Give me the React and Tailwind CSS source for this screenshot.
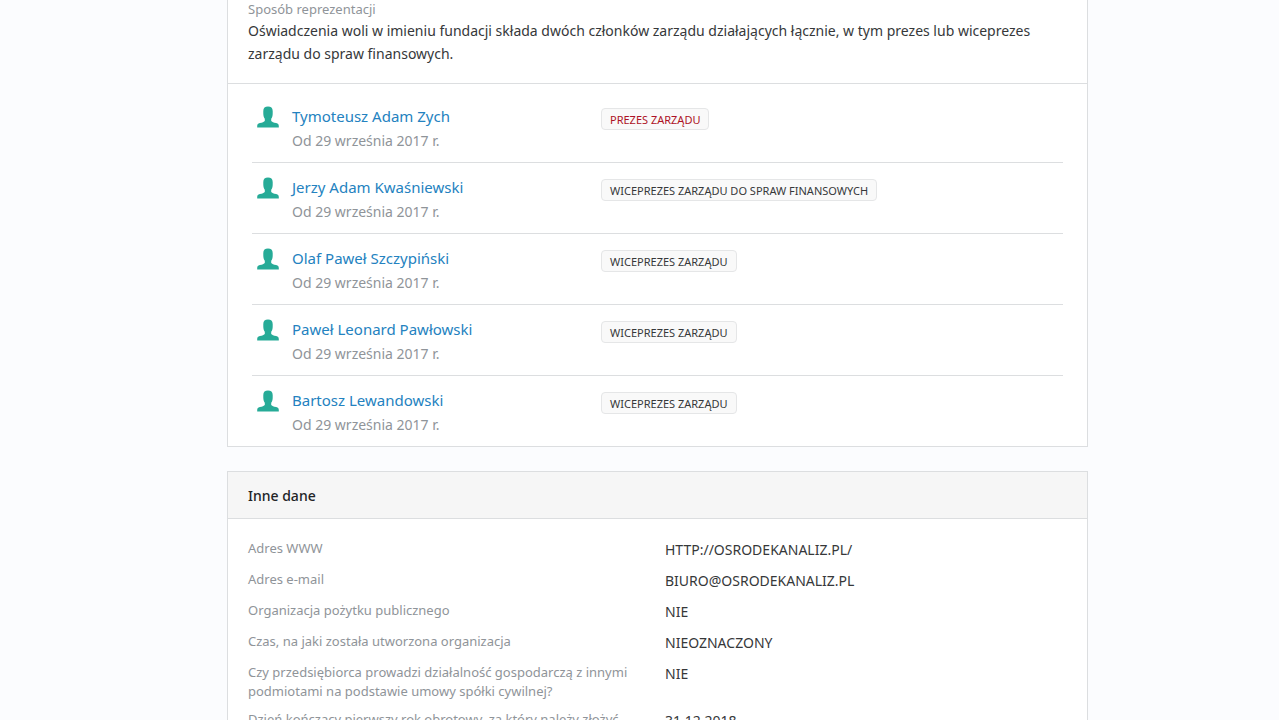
import React from "react";

const people = [
  { name: "Tymoteusz Adam Zych", role: "PREZES ZARZĄDU", main: true },
  { name: "Jerzy Adam Kwaśniewski", role: "WICEPREZES ZARZĄDU DO SPRAW FINANSOWYCH" },
  { name: "Olaf Paweł Szczypiński", role: "WICEPREZES ZARZĄDU" },
  { name: "Paweł Leonard Pawłowski", role: "WICEPREZES ZARZĄDU" },
  { name: "Bartosz Lewandowski", role: "WICEPREZES ZARZĄDU" },
];

const details = [
  { label: "Adres WWW", value: "HTTP://OSRODEKANALIZ.PL/" },
  { label: "Adres e-mail", value: "BIURO@OSRODEKANALIZ.PL" },
  { label: "Organizacja pożytku publicznego", value: "NIE" },
  { label: "Czas, na jaki została utworzona organizacja", value: "NIEOZNACZONY" },
  {
    label:
      "Czy przedsiębiorca prowadzi działalność gospodarczą z innymi podmiotami na podstawie umowy spółki cywilnej?",
    value: "NIE",
  },
  { label: "Dzień kończący pierwszy rok obrotowy, za który należy złożyć", value: "31.12.2018" },
];

function PersonIcon() {
  return (
    <svg viewBox="0 0 22 22" className="mt-3.5 h-[22px] w-[22px] shrink-0 fill-[#26ab97]" aria-hidden="true">
      <path d="M11 .5C8 .5 6.300 1.900 6.300 4.900v2.500c0 2.100.5 4 1.500 5.400v2.100c-.6.800-2.600 1.500-4.900 2.100C.9 17.600.2 18.300.2 20v1.500h21.600V20c0-1.700-.7-2.400-2.700-3-2.300-.6-4.300-1.300-4.900-2.100v-2.100c1-1.400 1.500-3.300 1.500-5.400V4.900C15.700 1.900 14 .5 11 .5z" />
    </svg>
  );
}

function Person({ person }) {
  return (
    <li className="flex border-b border-[#dcdee0] pb-2 pl-[5px] last:border-b-0">
      <PersonIcon />
      <div className="ml-[13px] w-[309px] shrink-0 pt-3">
        <a href="#" className="block text-[15px] leading-6 text-[#2482c0]">
          {person.name}
        </a>
        <p className="pt-0.5 pb-[3px] text-[14px] leading-[21px] text-[#8f9499]">
          Od 29 września 2017 r.
        </p>
      </div>
      <div className="pt-4">
        <span
          className={`block rounded border border-[#e5e6e7] bg-[#f9f9f9] px-2 pt-px text-[11px] leading-[19px] ${
            person.main ? "text-[#ad1226]" : "text-[#36383a]"
          }`}
        >
          {person.role}
        </span>
      </div>
    </li>
  );
}

export default function App() {
  return (
    <div className="flex h-screen justify-center overflow-hidden bg-[#fbfcfe] pl-9 font-['Noto_Sans',sans-serif] text-[#36383a]">
      <main className="w-full max-w-[861px]">
        <section className="border border-t-0 border-[#dcdee0] bg-white">
          <div className="border-b border-[#dcdee0] px-5 pb-[18px]">
            <h3 className="text-[13px] leading-[19px] text-[#8f9499]">Sposób reprezentacji</h3>
            <p className="text-[14px] leading-[23px]">
              Oświadczenia woli w imieniu fundacji składa dwóch członków zarządu działających
              łącznie, w tym prezes lub wiceprezes zarządu do spraw finansowych.
            </p>
          </div>
          <ul className="px-6 pt-2">
            {people.map((person) => (
              <Person key={person.name} person={person} />
            ))}
          </ul>
        </section>

        <section className="mt-6 border border-[#dcdee0] bg-white">
          <h2 className="border-b border-[#dcdee0] bg-[#f6f6f6] px-5 pt-px text-[14px] leading-[45px] font-medium text-[#222426]">
            Inne dane
          </h2>
          <dl className="px-5 pt-5">
            {details.map((item) => (
              <div key={item.label} className="flex pb-[9px]">
                <dt className="w-[387px] shrink-0 text-[13px] leading-[19px] text-[#8f9499]">
                  {item.label}
                </dt>
                <dd className="ml-[30px] text-[14px] leading-[22px]">{item.value}</dd>
              </div>
            ))}
          </dl>
        </section>
      </main>
    </div>
  );
}
